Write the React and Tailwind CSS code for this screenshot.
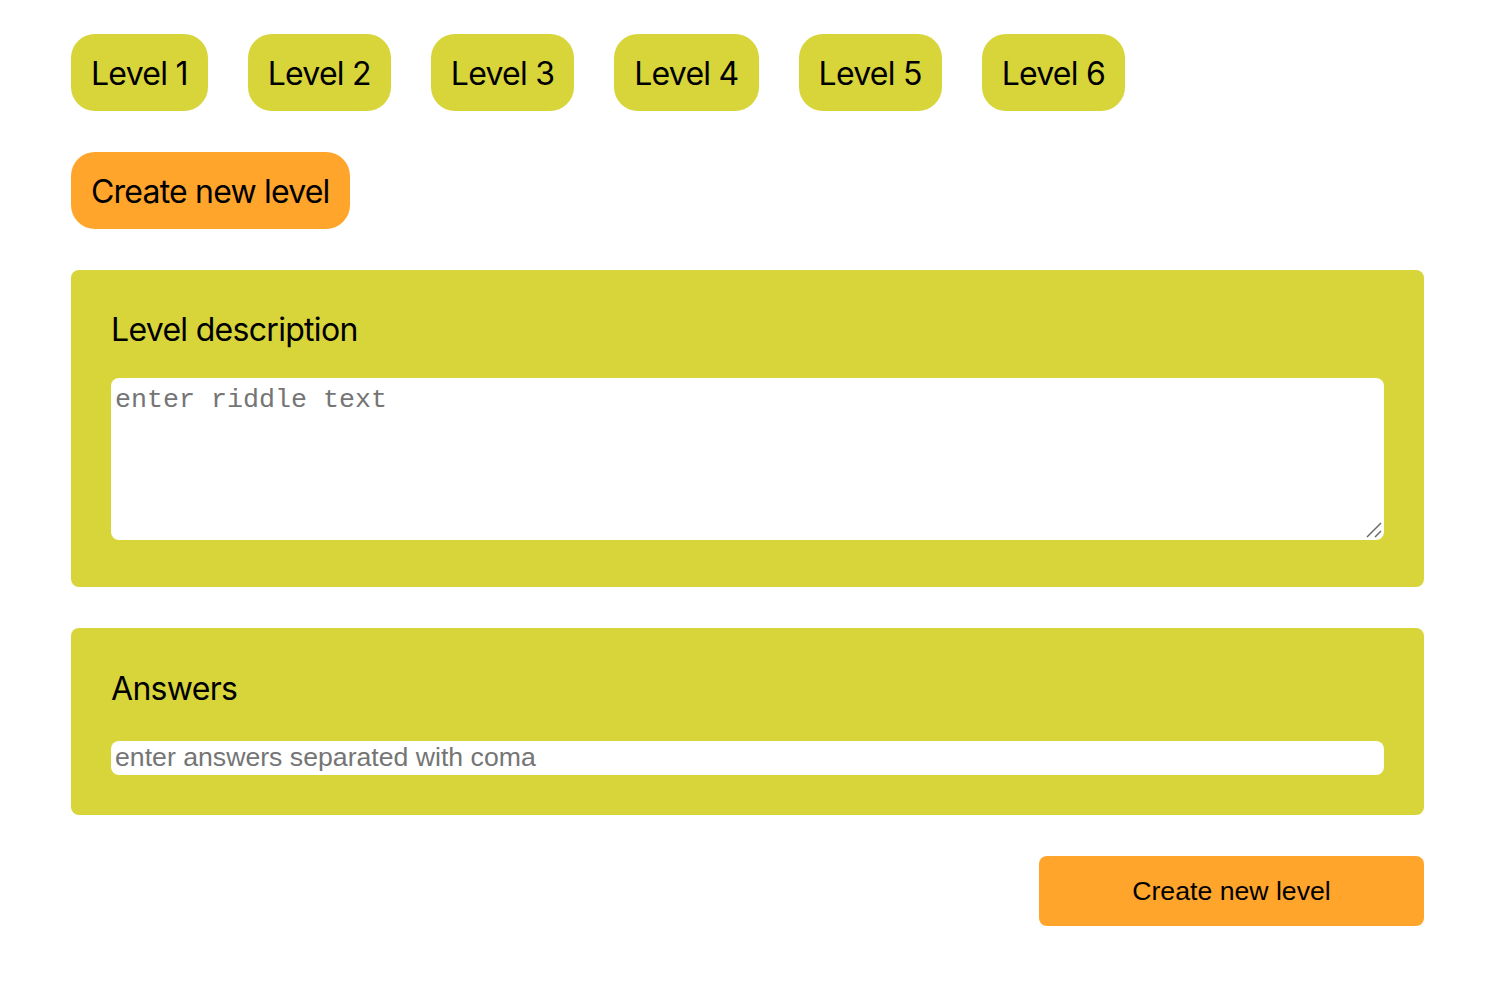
const levels = ["Level 1", "Level 2", "Level 3", "Level 4", "Level 5", "Level 6"];

const App = () => {
  return (
    <div className="min-h-screen bg-white pl-[71px] pr-[78px] pt-[34px] pb-16 font-['Inter',sans-serif] text-black">
      <div className="flex gap-10">
        {levels.map((l) => (
          <button
            key={l}
            className="h-[77px] px-5 pt-[2px] rounded-[24px] bg-[#d8d53a] text-[32px] tracking-[-0.75px] flex items-center"
          >
            {l}
          </button>
        ))}
      </div>

      <button className="mt-[41px] h-[77px] px-5 pt-[2px] rounded-[24px] bg-[#ffa52b] text-[32px] tracking-[-0.8px] flex items-center">
        Create new level
      </button>

      <div className="mt-[41px] bg-[#d8d53a] rounded-lg px-10 pt-10 pb-[47px]">
        <div className="text-[32px] tracking-[-0.7px] leading-[40px]">Level description</div>
        <div className="relative mt-[28px]">
          <textarea
            className="block w-full h-[162px] bg-white rounded-lg px-1 pt-[6px] resize-none font-['Liberation_Mono',monospace] text-[26.67px] leading-[32px] placeholder:text-[#757575] outline-none"
            placeholder="enter riddle text"
          />
          <svg
            className="absolute right-[1px] bottom-[1px] w-[18px] h-[18px] text-[#666]"
            viewBox="0 0 18 18"
            fill="none"
            stroke="currentColor"
            strokeWidth="1.5"
          >
            <path d="M2 16 L16 2" />
            <path d="M10 16 L16 10" />
          </svg>
        </div>
      </div>

      <div className="mt-[41px] bg-[#d8d53a] rounded-lg px-10 pt-10 pb-10">
        <div className="text-[32px] tracking-[-0.7px] leading-[40px] pt-[1px]">Answers</div>
        <input
          className="mt-[32px] block w-full h-[34px] bg-white rounded-lg px-1 font-['Liberation_Sans',sans-serif] text-[26.67px] placeholder:text-[#757575] outline-none"
          placeholder="enter answers separated with coma"
        />
      </div>

      <div className="mt-[41px] flex justify-end">
        <button className="w-[385px] h-[70px] rounded-lg bg-[#ffa52b] font-['Liberation_Sans',sans-serif] text-[26.67px]">
          Create new level
        </button>
      </div>
    </div>
  );
};

export default App;
